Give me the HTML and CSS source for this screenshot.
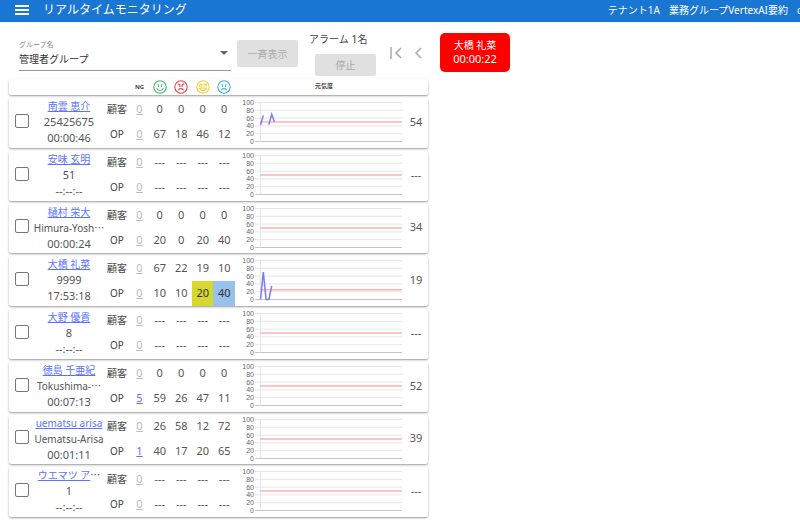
FILE: index.html
```html
<!DOCTYPE html>
<html lang="ja">
<head>
    <meta charset="UTF-8">
    <meta name="viewport" content="width=device-width, initial-scale=1.0">
    <title>リアルタイムモニタリング</title>
    <link rel="stylesheet" href="styles.css">
</head>
<body>
    <header class="appbar">
        <button class="menu" aria-label="メニュー">
            <svg width="14" height="10" viewBox="0 0 14 10"><path d="M0 1h14M0 5h14M0 9h14" stroke="#fff" stroke-width="2"/></svg>
        </button>
        <h1>リアルタイムモニタリング</h1>
        <div class="account">
            <span>テナント1A</span>
            <span>業務グループVertexAI要約</span>
            <span class="user">c</span>
        </div>
    </header>

    <main>
        <section class="monitor">
            <div class="controls">
                <div class="group">
                    <label for="group">グループ名</label>
                    <select id="group"><option>管理者グループ</option></select>
                </div>
                <button class="btn show-all" disabled>一斉表示</button>
                <div class="alarm">
                    <span>アラーム <span class="num">1</span>名</span>
                    <button class="btn stop" disabled>停止</button>
                </div>
                <div class="pager">
                    <button aria-label="最初へ">
                        <svg width="12" height="12" viewBox="0 0 12 12"><path d="M1 0v12M11 1L6 6l5 5"/></svg>
                    </button>
                    <button aria-label="前へ">
                        <svg width="12" height="12" viewBox="0 0 12 12"><path d="M8 1L3 6l5 5"/></svg>
                    </button>
                </div>
            </div>

            <table class="operators" id="operators">
                <thead>
                    <tr>
                        <th></th>
                        <th></th>
                        <th></th>
                        <th>NG</th>
                        <th>
                            <svg class="face" viewBox="0 0 26 26" stroke="#3dba68"><circle cx="13" cy="13" r="11.5"/><path d="M10 8v5M16 8v5M7 15c2 6 10 6 12 0"/></svg>
                        </th>
                        <th>
                            <svg class="face" viewBox="0 0 26 26" stroke="#ec3c46"><circle cx="13" cy="13" r="11.5"/><path d="M7 7l4 2v4M19 7l-4 2v4M8 19c2-4 8-4 10 0"/></svg>
                        </th>
                        <th>
                            <svg class="face" viewBox="0 0 26 26" stroke="#f8cc3c"><circle cx="13" cy="13" r="11.5"/><path d="M7 12V8h4v4M15 12V8h4v4M7 15h12c-1 6-11 6-12 0z"/></svg>
                        </th>
                        <th>
                            <svg class="face" viewBox="0 0 26 26" stroke="#38aeee"><circle cx="13" cy="13" r="11.5"/><path d="M10 8v5M16 8v5M8 19c2-4 8-4 10 0"/></svg>
                        </th>
                        <th class="energy">元気度</th>
                    </tr>
                </thead>
            </table>
        </section>

        <aside>
            <button class="alert">大橋 礼菜<br><span class="num">00:00:22</span></button>
        </aside>
    </main>

    <script src="app.js"></script>
</body>
</html>
```

FILE: styles.css
```css
* {
    box-sizing: border-box;
}
body {
    display: flex;
    flex-direction: column;
    min-height: 100vh;
    margin: 0;
    font-family: "Noto Sans", "Noto Sans CJK JP", sans-serif;
    font-size: 10px;
    line-height: 16px;
    color: #555;
    background-color: white;
}
button, select {
    font: inherit;
    color: inherit;
    padding: 0;
    border: none;
    background: none;
}
a {
    color: #5b74ff;
}
.num {
    font-size: 11px;
}

/* app bar */
.appbar {
    display: flex;
    align-items: center;
    height: 22px;
    padding: 0 0 3px 15px;
    color: white;
    background-color: #1976d2;
    white-space: nowrap;
    overflow: hidden;
}
.menu {
    display: flex;
    margin-right: 14px;
}
.appbar h1 {
    margin: 0;
    font-size: 12px;
    font-weight: normal;
}
.account {
    display: flex;
    gap: 9px;
    margin-left: auto;
}
.user {
    width: 3px;
    overflow: hidden;
}

main {
    display: grid;
    grid-template-columns: 419fr 360fr;
    gap: 12px;
    flex: 1;
    padding: 0 0 3px 9px;
}
.monitor {
    display: flex;
    flex-direction: column;
}

/* controls */
.controls {
    display: flex;
    height: 57px;
    padding-left: 10px;
}
.group {
    position: relative;
    display: flex;
    flex-direction: column;
    flex: 1;
    margin: 17px 6px 0 0;
}
.group::after {
    content: "";
    position: absolute;
    right: 3px;
    top: 12px;
    border: 4px solid transparent;
    border-top-color: #666;
    border-bottom: none;
    pointer-events: none;
}
.group label {
    font-size: 7px;
    line-height: 12px;
    color: #888;
}
.group select {
    appearance: none;
    height: 20px;
    padding-bottom: 3px;
    border-bottom: 1px solid #999;
    color: #333;
}
.btn {
    width: 61px;
    color: #aaa;
    background-color: #e0e0e0;
    border-radius: 2px;
}
.show-all {
    height: 27px;
    margin-top: 18px;
}
.alarm {
    display: flex;
    flex-direction: column;
    margin: 9px 14px 0 11px;
    color: #444;
}
.stop {
    height: 22px;
    margin: 7px 0 0 6px;
}
.pager {
    display: flex;
    gap: 11px;
    align-items: flex-start;
    margin: 25px 3px 0 0;
}
.pager button {
    display: flex;
}
.pager path {
    fill: none;
    stroke: #aaa;
    stroke-width: 1.5;
}

/* operator list, one card per tbody */
.operators {
    display: flex;
    flex-direction: column;
    flex: 1;
    gap: 3px;
}
.operators thead,
.operators tbody {
    display: grid;
    grid-template-columns: 25px 70px 26px 19px repeat(4, 9fr) 70fr 26px;
    border-radius: 2px;
    box-shadow: 0 1px 2px rgba(0, 0, 0, 0.4);
}
.operators tbody {
    grid-template-rows: 1fr 1fr;
    flex: 1;
}
.operators tr {
    display: contents;
}
.operators th,
.operators td {
    display: flex;
    align-items: center;
    justify-content: center;
    padding: 0 0 2px;
    font-weight: normal;
}
.operators thead th {
    height: 16px;
    padding-bottom: 0;
    font-size: 6px;
    font-weight: bold;
    line-height: 8px;
    color: #444;
}
.operators thead .energy {
    padding-left: 11px;
    padding-bottom: 2px;
}
.face {
    width: 14px;
    height: 14px;
    fill: none;
    stroke-width: 2;
}
.operators .tall {
    grid-row: span 2;
}
.operators .check {
    justify-content: flex-start;
    padding: 0 0 4px 6px;
}
.check input {
    appearance: none;
    width: 14px;
    height: 14px;
    margin: 0;
    border: 1px solid #777;
    border-radius: 2px;
}
.operators .who {
    flex-direction: column;
    justify-content: flex-start;
    padding: 0;
    white-space: nowrap;
}
.dots {
    font-family: "Noto Sans CJK JP", sans-serif;
    line-height: 1;
}
.operators .side {
    color: #444;
}
.ng {
    font-size: 11px;
}
.ng .zero {
    color: #bbb;
}
.operators .warn {
    color: #333;
    background-color: #d6d72f;
}
.operators .sad {
    color: #333;
    background-color: #98c1ec;
}
.operators .score {
    padding-left: 2px;
}

/* chart */
.operators .plot {
    align-items: flex-start;
    padding: 0;
}
.chart {
    width: 100%;
    height: 48px;
}
.chart text {
    font-family: "Liberation Sans", sans-serif;
    font-size: 7px;
    fill: #666;
    text-anchor: end;
}
.grid {
    stroke: #e6e6e6;
}
.base {
    stroke: #c4c4c4;
}
.average {
    stroke: #ffb0b0;
    stroke-width: 1.5;
}
.trend {
    fill: none;
    stroke: #7b7bff;
    stroke-width: 1.5;
}

.alert {
    width: 70px;
    height: 39px;
    margin-top: 11px;
    padding-bottom: 2px;
    line-height: 14px;
    color: white;
    background-color: #f00;
    border-radius: 5px;
}
```

FILE: app.js
```javascript
const none = ['---', '---', '---', '---'];

const operators = [
    { name: '南雲 恵介', id: '25425675', time: '00:00:46', ng: [0, 0], customer: [0, 0, 0, 0], op: [67, 18, 46, 12], score: 54, average: 50, trend: [42, 67, null, 43, 70, 50] },
    { name: '安味 玄明', id: '51', time: '--:--:--', ng: [0, 0], customer: none, op: none, score: '---', average: 50 },
    { name: '樋村 栄大', id: 'Himura-Yosh…', time: '00:00:24', ng: [0, 0], customer: [0, 0, 0, 0], op: [20, 0, 20, 40], score: 34, average: 50 },
    { name: '大橋 礼菜', id: '9999', time: '17:53:18', ng: [0, 0], customer: [67, 22, 19, 10], op: [10, 10, 20, 40], marks: ['', '', 'warn', 'sad'], score: 19, average: 25, trend: [0, 70, 0, 0, 35] },
    { name: '大野 優貴', id: '8', time: '--:--:--', ng: [0, 0], customer: none, op: none, score: '---', average: 50 },
    { name: '徳島 千亜紀', id: 'Tokushima-…', time: '00:07:13', ng: [0, 5], customer: [0, 0, 0, 0], op: [59, 26, 47, 11], score: 52, average: 50 },
    { name: 'uematsu arisa', id: 'Uematsu-Arisa', time: '00:01:11', ng: [0, 1], customer: [26, 58, 12, 72], op: [40, 17, 20, 65], score: 39, average: 50 },
    { name: 'ウエマツ ア…', id: '1', time: '--:--:--', ng: [0, 0], customer: none, op: none, score: '---', average: 50 }
];

const chartY = value => 43.5 - value * 0.39;

function chart(op) {
    let svg = '<svg class="chart" viewBox="0 0 167 48" preserveAspectRatio="xMinYMid">';
    for (let v = 0; v <= 100; v += 20) {
        const y = chartY(v);
        svg += `<text x="19" y="${y + 2.5}">${v}</text>`;
        svg += `<path class="${v ? 'grid' : 'base'}" d="M20 ${y}H167"/>`;
    }
    svg += `<path class="grid" d="M25.5 ${chartY(100)}V${chartY(0)}"/>`;
    svg += `<path class="average" d="M25 ${chartY(op.average)}H167"/>`;

    // a null breaks the line
    let d = '';
    let pen = 'M';
    (op.trend || []).forEach((v, i) => {
        if (v === null) {
            pen = 'M';
            return;
        }
        d += `${pen}${25.5 + i * 2.8} ${chartY(v)}`;
        pen = 'L';
    });
    return svg + `<path class="trend" d="${d}"/></svg>`;
}

// long names end in dots that are not part of the link
function link(name) {
    const cut = name.endsWith('…');
    return `<span><a href="#">${cut ? name.slice(0, -1) : name}</a>${cut ? '<span class="dots">…</span>' : ''}</span>`;
}

function idLine(id) {
    const num = /^\d/.test(id) ? ' class="num"' : '';
    return `<span${num}>${id.replace('…', '<span class="dots">…</span>')}</span>`;
}

function ngCell(count) {
    return `<td class="ng"><a href="#"${count ? '' : ' class="zero"'}>${count}</a></td>`;
}

function cells(values, marks = []) {
    return values.map((v, i) => `<td class="num ${marks[i] || ''}">${v}</td>`).join('');
}

const table = document.getElementById('operators');
operators.forEach(op => {
    const card = document.createElement('tbody');
    card.innerHTML = `
        <tr>
            <td class="tall check" rowspan="2"><input type="checkbox" aria-label="${op.name}"></td>
            <td class="tall who" rowspan="2">
                ${link(op.name)}
                ${idLine(op.id)}
                <span class="num">${op.time}</span>
            </td>
            <th class="side">顧客</th>
            ${ngCell(op.ng[0])}
            ${cells(op.customer)}
            <td class="tall plot" rowspan="2">${chart(op)}</td>
            <td class="tall num score" rowspan="2">${op.score}</td>
        </tr>
        <tr>
            <th class="side">OP</th>
            ${ngCell(op.ng[1])}
            ${cells(op.op, op.marks)}
        </tr>`;
    table.appendChild(card);
});
```
